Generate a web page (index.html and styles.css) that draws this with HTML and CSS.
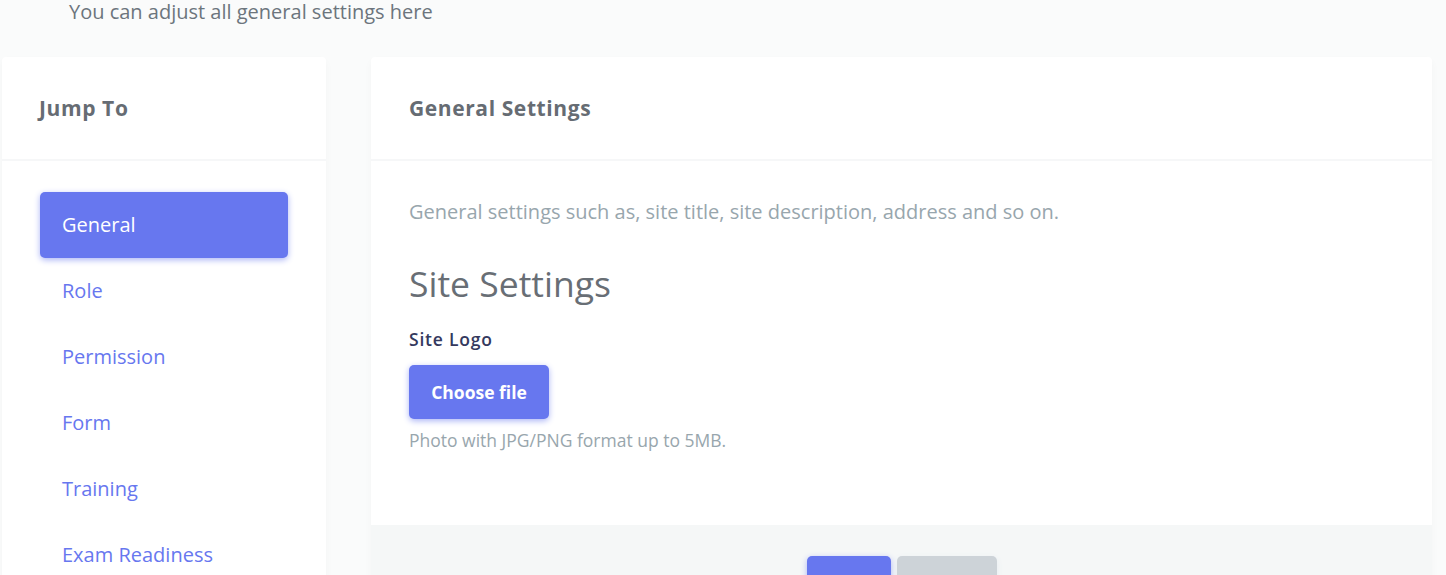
FILE: index.html
```html
<!DOCTYPE html>
<html lang="en">
<head>
<meta charset="utf-8">
<title>General Settings</title>
<link rel="stylesheet" href="styles.css">
</head>
<body>
<div class="page">
  <p class="section-lead">You can adjust all general settings here</p>
  <div class="layout">
    <aside class="card jump-card">
      <div class="card-header"><h4>Jump To</h4></div>
      <div class="card-body">
        <nav class="pills">
          <a class="pill active" href="#">General</a>
          <a class="pill" href="#">Role</a>
          <a class="pill" href="#">Permission</a>
          <a class="pill" href="#">Form</a>
          <a class="pill" href="#">Training</a>
          <a class="pill" href="#">Exam Readiness</a>
        </nav>
      </div>
    </aside>
    <section class="card settings-card">
      <div class="card-header"><h4>General Settings</h4></div>
      <div class="card-body settings-body">
        <p class="lead">General settings such as, site title, site description, address and so on.</p>
        <h3 class="block-title">Site Settings</h3>
        <div class="form-group">
          <label class="label">Site Logo</label>
          <button class="btn btn-primary choose">Choose file</button>
          <div class="help">Photo with JPG/PNG format up to 5MB.</div>
        </div>
      </div>
      <div class="card-footer">
        <button class="btn btn-primary save">Save</button>
        <button class="btn btn-secondary reset">Reset</button>
      </div>
    </section>
  </div>
</div>
</body>
</html>
```
FILE: styles.css
```css
* { box-sizing: border-box; }
html, body { margin: 0; padding: 0; }
body {
  background: #fafbfb;
  font-family: "Open Sans", "Noto Sans", sans-serif;
  color: #6c757d;
  overflow: hidden;
  height: 575px;
}
.page { padding: 0 14px 0 2px; }
.section-lead {
  margin: 0;
  padding-left: 67px;
  font-size: 20px;
  line-height: 24px;
  height: 24px;
  color: #6c757d;
}
.layout {
  display: grid;
  grid-template-columns: 324px 1061px;
  column-gap: 45px;
  margin-top: 33px;
}
.card {
  background: #fff;
  border-radius: 4px;
  box-shadow: 0 4px 8px rgba(0,0,0,0.03);
}
.card-header {
  height: 104px;
  padding: 0 38px 1px 37px;
  display: flex;
  align-items: center;
  border-bottom: 2px solid #f6f7f8;
}
.card-header h4 {
  margin: 0;
  font-size: 21px;
  letter-spacing: 0.6px;
  font-weight: 700;
  color: #666c73;
}
.jump-card .card-body { padding: 31px 38px 0 38px; }
.pills { display: flex; flex-direction: column; }
.pill {
  display: flex;
  align-items: center;
  height: 66px;
  padding: 0 0 2px 22px;
  font-size: 20px;
  color: #6777ef;
  text-decoration: none;
  border-radius: 5px;
}
.pill.active {
  background: #6777ef;
  color: #fff;
  box-shadow: 0 2px 6px #acb5f6;
}
.settings-card .card-header { padding-left: 38px; }
.settings-body { padding: 36px 38px 74px 38px; }
.lead {
  margin: 0;
  font-size: 20px;
  line-height: 30px;
  color: #98a6ad;
}
.block-title {
  margin: 35px 0 0 0;
  font-size: 35.5px;
  line-height: 42px;
  font-weight: 400;
  color: #686e75;
}
.form-group { margin-top: 24px; display: flex; flex-direction: column; align-items: flex-start; }
.label {
  font-size: 17.5px;
  line-height: 22px;
  font-weight: 600;
  color: #34395e;
  letter-spacing: 0.8px;
}
.btn {
  border: none;
  border-radius: 5px;
  font-family: inherit;
  font-weight: 700;
  font-size: 17.5px;
  color: #fff;
  cursor: pointer;
}
.btn-primary { background: #6777ef; box-shadow: 0 2px 6px #acb5f6; }
.btn-secondary { background: #cdd3d8; box-shadow: 0 2px 6px #e6ecf1; color: #fff; }
.choose { margin-top: 15px; width: 140px; height: 54px; padding-bottom: 2px; }
.help {
  margin-top: 10px;
  font-size: 17.5px;
  line-height: 22px;
  color: #98a6ad;
}
.card-footer {
  background: #f5f7f7;
  padding: 31px 0 30px 0;
  display: flex;
  justify-content: center;
  gap: 6px;
}
.save { width: 84px; height: 54px; }
.reset { width: 100px; height: 54px; }
```
